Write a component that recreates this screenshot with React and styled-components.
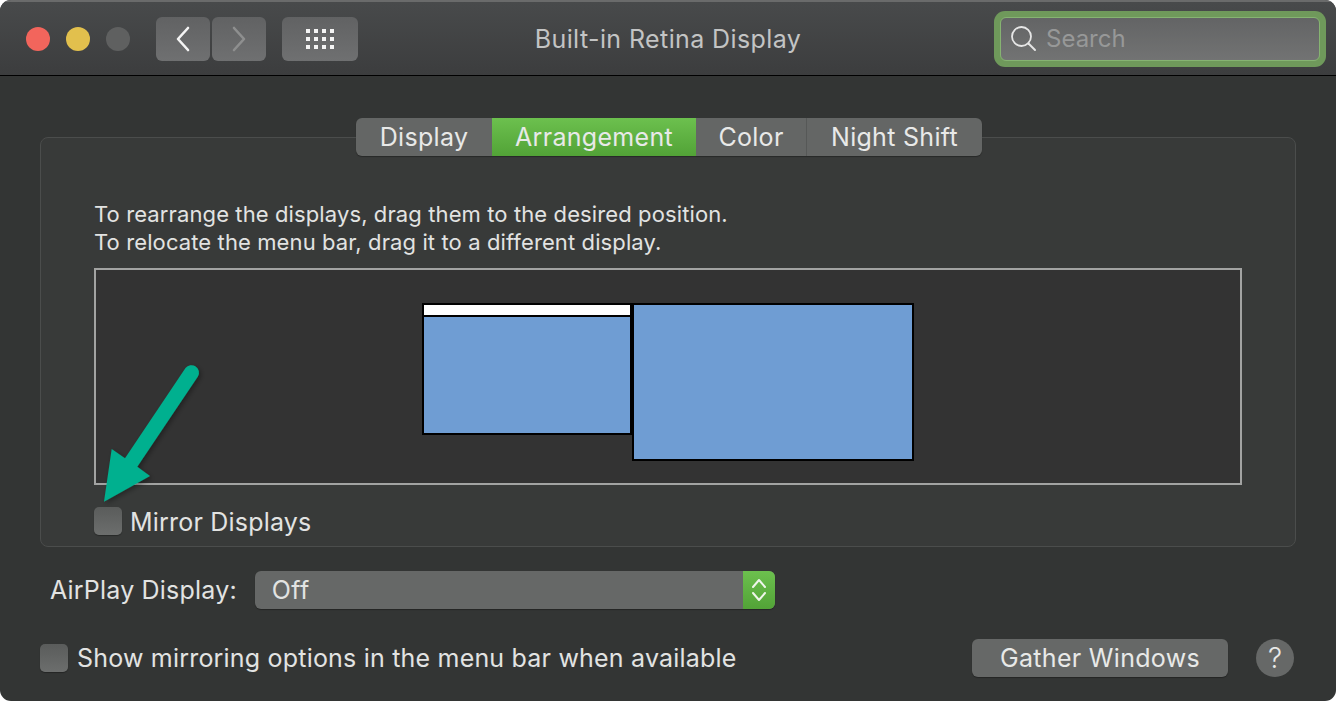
import React from 'react';
import styled, { createGlobalStyle } from 'styled-components';

const GlobalStyle = createGlobalStyle`
html, body {
  margin: 0;
  padding: 0;
  background: #fff;
}
* {
  box-sizing: border-box;
}
`;

const tabs = [
  { label: 'Display', width: 136 },
  { label: 'Arrangement', width: 204, active: true },
  { label: 'Color', width: 110 },
  { label: 'Night Shift', width: 176 },
];

export default function App() {
  return (
    <Window>
      <GlobalStyle />
      <TitleBar>
        <Lights>
          <Light color="#f2655c" />
          <Light color="#e2c04d" />
          <Light color="#5f6060" />
        </Lights>
        <NavGroup>
          <ToolButton width={54}>
            <svg width="16" height="26" viewBox="0 0 16 26" fill="none">
              <path d="M13 2 L3 13 L13 24" stroke="#f4f4f4" strokeWidth="2.6" strokeLinecap="round" strokeLinejoin="round" />
            </svg>
          </ToolButton>
          <ToolButton width={54}>
            <svg width="16" height="26" viewBox="0 0 16 26" fill="none">
              <path d="M3 2 L13 13 L3 24" stroke="#8e8f8f" strokeWidth="2.6" strokeLinecap="round" strokeLinejoin="round" />
            </svg>
          </ToolButton>
        </NavGroup>
        <ToolButton width={76}>
          <svg width="28" height="20" viewBox="0 0 28 20" fill="#f4f4f4">
            {[0, 8, 16].map((y) =>
              [0, 8, 16, 24].map((x) => <rect key={`${x}-${y}`} x={x} y={y} width="4" height="4" />)
            )}
          </svg>
        </ToolButton>
        <Title>Built-in Retina Display</Title>
        <SearchRing>
          <SearchField>
            <svg width="28" height="28" viewBox="0 0 28 28" fill="none">
              <circle cx="11.5" cy="11.5" r="9.5" stroke="#e6e6e6" strokeWidth="1.8" />
              <path d="M18.5 18.5 L25 25" stroke="#e6e6e6" strokeWidth="2" strokeLinecap="round" />
            </svg>
            <Placeholder>Search</Placeholder>
          </SearchField>
        </SearchRing>
      </TitleBar>

      <Content>
        <TabBar>
          {tabs.map((t) => (
            <Tab key={t.label} width={t.width} $active={t.active}>{t.label}</Tab>
          ))}
        </TabBar>
        <Panel>
          <Hint>
            To rearrange the displays, drag them to the desired position.
            <br />
            To relocate the menu bar, drag it to a different display.
          </Hint>
          <Arrangement>
            <SmallDisplay>
              <MenuBar />
            </SmallDisplay>
            <LargeDisplay />
          </Arrangement>
          <MirrorRow>
            <Checkbox />
            <MirrorLabel>Mirror Displays</MirrorLabel>
          </MirrorRow>
        </Panel>

        <AirPlayRow>
          <Label>AirPlay Display:</Label>
          <Select>
            <SelectValue>Off</SelectValue>
            <Stepper>
              <svg width="16" height="24" viewBox="0 0 16 24" fill="none">
                <path d="M2 9 L8 2 L14 9" stroke="#eef5ea" strokeWidth="2" strokeLinecap="round" strokeLinejoin="round" />
                <path d="M2 15 L8 22 L14 15" stroke="#eef5ea" strokeWidth="2" strokeLinecap="round" strokeLinejoin="round" />
              </svg>
            </Stepper>
          </Select>
        </AirPlayRow>

        <BottomRow>
          <Checkbox />
          <Label>Show mirroring options in the menu bar when available</Label>
          <GatherButton>Gather Windows</GatherButton>
          <HelpButton>?</HelpButton>
        </BottomRow>
      </Content>

      <Arrow width="124" height="150" viewBox="0 0 124 150">
        <defs>
          <filter id="arrowShadow" x="-20%" y="-20%" width="140%" height="140%">
            <feDropShadow dx="2" dy="2" stdDeviation="2.5" floodColor="#000" floodOpacity="0.35" />
          </filter>
        </defs>
        <path
          d="M14 141.7 L21.7 89 L35 98.3 L95.5 8.1 A7.5 7.5 0 0 1 107.9 16.5 L47.3 106.7 L60 116 Z"
          fill="#06b08f"
          filter="url(#arrowShadow)"
        />
      </Arrow>
    </Window>
  );
}

const Window = styled.div`
  position: relative;
  width: 1336px;
  height: 701px;
  border-radius: 11px;
  overflow: hidden;
  background: #333534;
  font-family: Inter, "Liberation Sans", sans-serif;
  color: #e2e3e2;
`;

const TitleBar = styled.div`
  position: relative;
  height: 76px;
  display: flex;
  align-items: center;
  padding: 0 10px 0 26px;
  background: linear-gradient(#484a4b, #3c3d3e);
  border-top: 2px solid #6a6b6b;
  border-bottom: 1px solid #000;
`;

const Lights = styled.div`
  display: flex;
  gap: 16px;
  margin-right: 26px;
`;

const Light = styled.span`
  width: 24px;
  height: 24px;
  border-radius: 50%;
  background: ${(p) => p.color};
`;

const NavGroup = styled.div`
  display: flex;
  gap: 2px;
  margin-right: 16px;
`;

const ToolButton = styled.div`
  width: ${(p) => p.width}px;
  height: 44px;
  border-radius: 6px;
  display: flex;
  align-items: center;
  justify-content: center;
  background: linear-gradient(#616263, #6f7071);
`;

const Title = styled.div`
  position: absolute;
  left: 0;
  right: 0;
  top: 19px;
  text-align: center;
  font-size: 25px;
  letter-spacing: 0.4px;
  line-height: 36px;
  color: #c3c4c4;
  pointer-events: none;
`;

const SearchRing = styled.div`
  margin-left: auto;
  width: 332px;
  height: 56px;
  padding: 6px;
  border-radius: 11px;
  background: #6f995b;
`;

const SearchField = styled.div`
  height: 44px;
  display: flex;
  align-items: center;
  gap: 8px;
  padding: 0 0 0 9px;
  border: 1px solid #86b372;
  border-radius: 6px;
  background: linear-gradient(#636465, #727373);
`;

const Placeholder = styled.span`
  font-size: 24px;
  color: #979898;
`;

const Content = styled.div`
  padding: 42px 40px 0;
`;

const TabBar = styled.div`
  position: relative;
  z-index: 1;
  width: 626px;
  height: 38px;
  margin: 0 0 -19px 316px;
  display: flex;
  border-radius: 6px;
  overflow: hidden;
  background: #646665;
  box-shadow: 0 1px 1px rgba(0, 0, 0, 0.3);
`;

const Tab = styled.div`
  width: ${(p) => p.width}px;
  display: flex;
  align-items: center;
  justify-content: center;
  font-size: 25px;
  letter-spacing: 0.3px;
  color: #e8e9e8;
  background: ${(p) => (p.$active ? 'linear-gradient(#6cc04e, #52a337)' : 'transparent')};
  &:last-child {
    border-left: 1px solid #565857;
  }
`;

const Panel = styled.div`
  width: 1256px;
  height: 410px;
  padding: 62px 53px 0;
  border: 1px solid #4b4d4c;
  border-radius: 8px;
  background: #383a39;
`;

const Hint = styled.div`
  font-size: 22px;
  letter-spacing: 0.11px;
  line-height: 28px;
  height: 68px;
  color: #e2e3e2;
`;

const Arrangement = styled.div`
  height: 217px;
  padding: 33px 0 0 326px;
  display: flex;
  align-items: flex-start;
  border: 2px solid #a2a3a2;
  background: #333333;
`;

const SmallDisplay = styled.div`
  width: 210px;
  height: 132px;
  border: 2px solid #000;
  background: #6f9dd3;
`;

const MenuBar = styled.div`
  height: 12px;
  background: #fff;
  border-bottom: 2px solid #000;
`;

const LargeDisplay = styled.div`
  width: 282px;
  height: 158px;
  border: 2px solid #000;
  background: #6f9dd3;
`;

const MirrorRow = styled.div`
  display: flex;
  align-items: flex-start;
  gap: 8px;
  margin-top: 22px;
`;

const Checkbox = styled.div`
  width: 28px;
  height: 28px;
  flex: none;
  border-radius: 5px;
  background: linear-gradient(#5a5c5b, #6c6e6d);
  box-shadow: 0 1px 1px rgba(0, 0, 0, 0.3);
`;

const Label = styled.span`
  font-size: 25px;
  letter-spacing: 0.2px;
  line-height: 28px;
  white-space: nowrap;
`;

const MirrorLabel = styled(Label)`
  line-height: 30px;
`;

const AirPlayRow = styled.div`
  display: flex;
  align-items: center;
  gap: 18px;
  margin-top: 24px;
  padding-left: 10px;
`;

const Select = styled.div`
  width: 520px;
  height: 38px;
  display: flex;
  border-radius: 6px;
  overflow: hidden;
  background: #666867;
  box-shadow: 0 1px 1px rgba(0, 0, 0, 0.3);
`;

const SelectValue = styled.span`
  flex: 1;
  padding-left: 17px;
  font-size: 25px;
  letter-spacing: 0.4px;
  line-height: 38px;
`;

const Stepper = styled.div`
  width: 32px;
  display: flex;
  align-items: center;
  justify-content: center;
  background: linear-gradient(#6cc04e, #52a337);
`;

const BottomRow = styled.div`
  display: flex;
  align-items: center;
  gap: 9px;
  margin-top: 30px;
`;

const GatherButton = styled.div`
  width: 256px;
  height: 38px;
  margin-left: auto;
  margin-right: 19px;
  display: flex;
  align-items: center;
  justify-content: center;
  border-radius: 6px;
  font-size: 25px;
  letter-spacing: 0.3px;
  color: #e8e9e8;
  background: #666867;
  box-shadow: 0 1px 1px rgba(0, 0, 0, 0.3);
`;

const HelpButton = styled.div`
  width: 38px;
  height: 38px;
  flex: none;
  margin-right: 2px;
  display: flex;
  align-items: center;
  justify-content: center;
  border-radius: 50%;
  font-size: 28px;
  font-weight: 300;
  color: #e8e9e8;
  background: #666867;
`;

const Arrow = styled.svg`
  position: absolute;
  left: 90px;
  top: 360px;
  pointer-events: none;
`;
